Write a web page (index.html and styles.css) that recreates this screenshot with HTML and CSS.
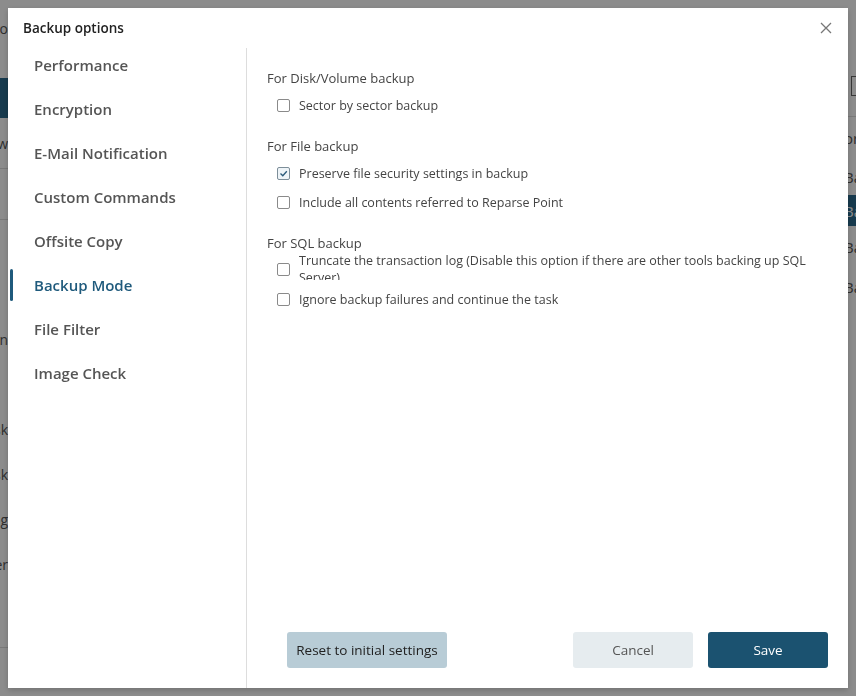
FILE: index.html
```html
<!DOCTYPE html>
<html lang="en">
<head>
    <meta charset="UTF-8">
    <meta name="viewport" content="width=device-width, initial-scale=1.0">
    <title>Backup options</title>
    <link rel="stylesheet" href="styles.css">
</head>
<body>
    <!-- app behind the modal -->
    <div class="app">
        <div class="app-nav">
            <div class="nav-logo"><span>Backup Pro</span></div>
            <div class="nav-item nav-active"></div>
            <div class="nav-item nav-sep"><span>New</span></div>
            <div class="nav-item nav-sep"></div>
            <div class="nav-item nav-low"><span>Restoration</span></div>
            <div class="nav-item nav-gap"><span>Disk</span></div>
            <div class="nav-item"><span>Task</span></div>
            <div class="nav-item"><span>Log</span></div>
            <div class="nav-item"><span>Center</span></div>
        </div>
        <div class="app-main"></div>
        <div class="app-list">
            <div class="list-tool"><span class="list-box"></span></div>
            <div class="list-row row-first"><span>or</span></div>
            <div class="list-row"><span>Ba</span></div>
            <div class="list-row list-sel"><span>Ba</span></div>
            <div class="list-row row-tall"><span>Ba</span></div>
            <div class="list-row"><span>Ba</span></div>
        </div>
    </div>
    <div class="overlay"></div>

    <div class="dialog">
        <div class="dialog-header">
            <h2>Backup options</h2>
            <button class="close-btn" aria-label="Close">
                <svg width="12" height="12" viewBox="0 0 12 12"><path d="M1 1 L11 11 M11 1 L1 11" stroke="#777" stroke-width="1.3"/></svg>
            </button>
        </div>
        <div class="dialog-body">
            <ul class="menu">
                <li>Performance</li>
                <li>Encryption</li>
                <li>E-Mail Notification</li>
                <li>Custom Commands</li>
                <li>Offsite Copy</li>
                <li class="active">Backup Mode</li>
                <li>File Filter</li>
                <li>Image Check</li>
            </ul>
            <div class="panel">
                <div class="options">
                    <div class="group">
                        <div class="group-title">For Disk/Volume backup</div>
                        <label class="option"><span class="check"></span><span>Sector by sector backup</span></label>
                    </div>
                    <div class="group">
                        <div class="group-title">For File backup</div>
                        <label class="option"><span class="check checked">
                            <svg width="9" height="9" viewBox="0 0 9 9"><path d="M1.5 4.5 L3.8 6.8 L7.8 2.2" fill="none" stroke="#2a5a7a" stroke-width="1.3"/></svg>
                        </span><span>Preserve file security settings in backup</span></label>
                        <label class="option"><span class="check"></span><span>Include all contents referred to Reparse Point</span></label>
                    </div>
                    <div class="group">
                        <div class="group-title">For SQL backup</div>
                        <label class="option option-long"><span class="check"></span><span class="long-text">Truncate the transaction log (Disable this option if there are other tools backing up SQL Server)</span></label>
                        <label class="option"><span class="check"></span><span>Ignore backup failures and continue the task</span></label>
                    </div>
                </div>
                <div class="footer">
                    <button class="btn btn-reset">Reset to initial settings</button>
                    <div class="footer-right">
                        <button class="btn btn-cancel">Cancel</button>
                        <button class="btn btn-save">Save</button>
                    </div>
                </div>
            </div>
        </div>
    </div>
</body>
</html>
```

FILE: styles.css
```css
body {
    margin: 0;
    font-family: "Open Sans", "Noto Sans", sans-serif;
    background-color: #fff;
    height: 696px;
    overflow: hidden;
}

/* background app */
.app {
    display: flex;
    height: 696px;
}

.app-nav {
    width: 8px;
    height: 647px;
    overflow: hidden;
    display: flex;
    flex-direction: column;
    font-size: 14px;
    color: #555;
    border-bottom: 1px solid #ddd;
}

.nav-logo,
.nav-item {
    display: flex;
    justify-content: flex-end;
    align-items: center;
    white-space: nowrap;
    flex-shrink: 0;
}

.nav-logo {
    height: 56px;
}

.nav-item {
    height: 45px;
}

.nav-active {
    margin-top: 22px;
    height: 40px;
    background-color: #2a6a8e;
}

.nav-sep {
    height: 50px;
    border-bottom: 1px solid #ddd;
}

.nav-low {
    margin-top: 97px;
}

.nav-gap {
    margin-top: 45px;
}

.app-main {
    flex: 1;
    border-bottom: 1px solid #ddd;
    height: 647px;
}

.app-list {
    width: 8px;
    overflow: hidden;
    font-size: 15px;
    color: #555;
}

.list-tool {
    display: flex;
    align-items: flex-start;
    height: 116px;
    border-bottom: 1px solid #ddd;
}

.list-box {
    display: block;
    width: 18px;
    height: 18px;
    margin: 76px 0 0 3px;
    border: 1px solid #666;
    flex-shrink: 0;
}

.list-row {
    height: 37px;
    display: flex;
    align-items: center;
    white-space: nowrap;
}

.list-row span {
    margin-left: -4px;
}

.row-first {
    height: 41px;
}

.row-tall {
    height: 42px;
}

.list-sel {
    height: 31px;
    background-color: #2a6a8e;
    color: #fff;
}

.overlay {
    position: fixed;
    inset: 0;
    background-color: rgba(0, 0, 0, 0.45);
}

/* dialog */
.dialog {
    position: fixed;
    left: 8px;
    top: 8px;
    width: 840px;
    height: 680px;
    background-color: #fff;
    box-shadow: 0 2px 6px rgba(0, 0, 0, 0.2);
    display: flex;
    flex-direction: column;
}

.dialog-header {
    height: 35px;
    display: flex;
    align-items: center;
    justify-content: space-between;
    padding: 0 16px 0 15px;
    flex-shrink: 0;
}

.dialog-header h2 {
    margin: 4px 0 0;
    font-size: 13.5px;
    font-weight: 600;
    color: #222;
}

.close-btn {
    background: none;
    border: none;
    padding: 0;
    margin-top: 5px;
    display: flex;
    cursor: pointer;
}

.dialog-body {
    flex: 1;
    display: flex;
}

.menu {
    list-style: none;
    margin: 0;
    padding: 0;
    width: 238px;
    flex-shrink: 0;
}

.menu li {
    position: relative;
    height: 44px;
    line-height: 44px;
    padding-left: 26px;
    font-size: 15px;
    font-weight: 600;
    color: #555;
}

.menu li.active {
    color: #1f5a7c;
}

.menu li.active::before {
    content: "";
    position: absolute;
    left: 2px;
    top: 6px;
    width: 3px;
    height: 32px;
    border-radius: 2px;
    background-color: #1f5a7c;
}

.panel {
    flex: 1;
    margin-top: 5px;
    border-left: 1px solid #ddd;
    display: flex;
    flex-direction: column;
    padding: 21px 20px 20px 20px;
}

.options {
    flex: 1;
}

.group {
    margin-bottom: 17px;
}

.group-title {
    height: 18px;
    line-height: 18px;
    font-size: 13px;
    color: #444;
    margin-bottom: 4px;
}

.option {
    display: flex;
    align-items: center;
    height: 29px;
    padding-left: 10px;
    font-size: 12.5px;
    color: #444;
}

.check {
    width: 11px;
    height: 11px;
    border: 1px solid #8a8a8a;
    border-radius: 2px;
    margin-right: 9px;
    flex-shrink: 0;
    display: flex;
    align-items: center;
    justify-content: center;
}

.check.checked {
    background-color: #eef4f8;
    border-color: #7d8e99;
}

.option-long {
    align-items: flex-start;
}

.option-long .check {
    margin-top: 7px;
}

.long-text {
    margin-top: -4px;
    height: 28px;
    line-height: 17px;
    overflow: hidden;
    padding-right: 10px;
}

.footer {
    display: flex;
    justify-content: space-between;
    align-items: center;
    padding-left: 20px;
}

.footer-right {
    display: flex;
    gap: 15px;
}

.btn {
    height: 36px;
    border: none;
    border-radius: 3px;
    font-family: inherit;
    font-size: 13.5px;
    cursor: pointer;
}

.btn-reset {
    width: 160px;
    background-color: #b8ccd6;
    color: #222;
}

.btn-cancel {
    width: 120px;
    background-color: #e6ecef;
    color: #555;
}

.btn-save {
    width: 120px;
    background-color: #1b5270;
    color: #fff;
}
```
